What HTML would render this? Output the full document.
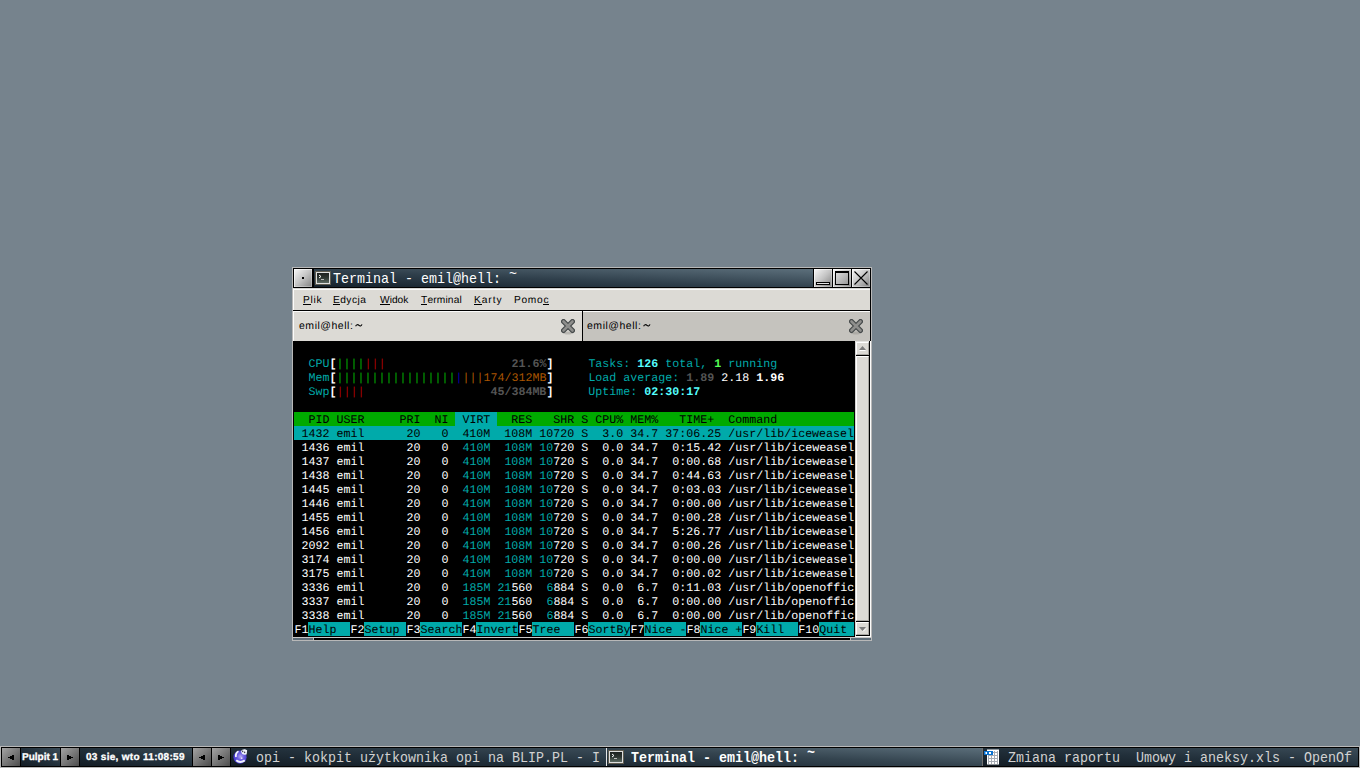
<!DOCTYPE html>
<html><head><meta charset="utf-8">
<style>
*{margin:0;padding:0;box-sizing:border-box}
html,body{width:1360px;height:768px;overflow:hidden;background:#76838d;position:relative;font-family:"Liberation Sans",sans-serif}
.a{position:absolute}
.btn{position:absolute;background:linear-gradient(135deg,#f8f8f8 0%,#c4c4c4 50%,#808080 100%);box-shadow:inset 1px 1px 0 rgba(255,255,255,.6),inset -1px -1px 0 rgba(255,255,255,.3)}
.tb{position:absolute;background:linear-gradient(135deg,#a4a4a4 0%,#4c4c4c 100%)}
.term{position:absolute;left:294px;top:342px;width:560px;height:294px;font-family:"Liberation Mono",monospace;font-size:11.67px;color:#fff}
.r{position:absolute;left:0.5px;height:14px;line-height:14px;white-space:pre;width:560px;margin-top:1px;text-rendering:geometricPrecision}
.rb{position:absolute;left:0;height:14px;line-height:14px;white-space:pre;width:560px;color:transparent}
.mono{font-family:"Liberation Mono",monospace}
.mi{position:absolute;top:294px;font-size:10.2px;letter-spacing:0.45px;text-rendering:geometricPrecision;line-height:14px;color:#000;white-space:pre}
.mi u{text-decoration:none;position:relative}
.mi u:after{content:"";position:absolute;left:0;right:0;bottom:1px;height:1px;background:#000}
.ttl{position:absolute;height:18px;line-height:18px;font-size:13.33px;white-space:pre;font-family:"Liberation Mono",monospace;transform:scaleY(1.11);transform-origin:0 4px}
.navy{position:absolute;background:linear-gradient(to top right,#131c24 0%,#22303b 50%,#3b4c58 100%)}
</style></head><body>

<!-- window frame -->
<div class="a" style="left:292px;top:267px;width:580px;height:374px;background:#b8b8b8"></div>
<div class="a" style="left:293px;top:268px;width:578px;height:20px;background:#000"></div>
<!-- menu button -->
<div class="btn" style="left:294px;top:269px;width:18px;height:18px"></div>
<div class="a" style="left:302px;top:277px;width:2px;height:2px;background:#000"></div>
<!-- titlebar gradient -->
<div class="a" style="left:314px;top:269px;width:499px;height:18px;background:linear-gradient(to top right,#15212b 0%,#2f3f4b 45%,#5c6f7b 100%)"></div>
<!-- terminal icon -->
<div class="a" style="left:315px;top:271px;width:16px;height:14px;border:1px solid #5f5c50;background:#dedede"></div>
<div class="a" style="left:317px;top:273px;width:12px;height:10px;background:linear-gradient(#1c201e 0%,#2e3632 50%,#5d6b63 100%)"></div>
<svg class="a" style="left:317px;top:273px" width="12" height="10"><path d="M2 2 L4 3.5 L2 5" stroke="#fff" stroke-width="1" fill="none"/><rect x="4" y="6" width="3" height="1" fill="#bbb"/></svg>
<!-- title text -->
<div class="ttl" style="left:333px;top:270px;color:#fff">Terminal - emil@hell: <span style="position:relative;top:-4px">~</span></div>
<!-- titlebar buttons -->
<div class="btn" style="left:814px;top:269px;width:18px;height:18px"></div>
<div class="a" style="left:816px;top:282px;width:14px;height:3px;border:1px solid #000;background:#e0e0e0"></div>
<div class="btn" style="left:833px;top:269px;width:18px;height:18px"></div>
<div class="a" style="left:835px;top:271px;width:14px;height:14px;border:1px solid #000;border-top-width:2px;background:linear-gradient(135deg,#dcdcdc,#9a9a9a)"></div>
<div class="btn" style="left:852px;top:269px;width:18px;height:18px"></div>
<svg class="a" style="left:852px;top:269px" width="18" height="18"><path d="M2.5 2.5 L15.5 15.5 M15.5 2.5 L2.5 15.5" stroke="#000" stroke-width="1.1"/></svg>

<!-- menubar -->
<div class="a" style="left:293px;top:288px;width:578px;height:23px;background:#000"></div>
<div class="a" style="left:293px;top:288px;width:577px;height:22px;background:#dcdad5;border-top:1px solid #d4d4d2;border-left:1px solid #fbfbfa"></div>
<div class="a" style="left:293px;top:289px;width:577px;height:1px;background:#fbfbfa"></div>
<div class="mi" style="left:303px;letter-spacing:0.75px"><u>P</u>lik</div>
<div class="mi" style="left:333px"><u>E</u>dycja</div>
<div class="mi" style="left:380px;letter-spacing:0"><u>W</u>idok</div>
<div class="mi" style="left:421px;letter-spacing:0.16px"><u>T</u>erminal</div>
<div class="mi" style="left:474px;letter-spacing:0.95px"><u>K</u>arty</div>
<div class="mi" style="left:514px;letter-spacing:0.7px">Pomo<u>c</u></div>

<!-- tabs -->
<div class="a" style="left:293px;top:311px;width:578px;height:30px;background:#000"></div>
<div class="a" style="left:293px;top:311px;width:289px;height:30px;background:#dcdad5;border-top:1px solid #fbfbfa;border-left:1px solid #fbfbfa"></div>
<div class="a" style="left:583px;top:311px;width:287px;height:30px;background:#c5c3be;border-top:1px solid #fbfbfa"></div>
<div class="a" style="left:299px;top:319px;font-size:10.5px;letter-spacing:0.52px;line-height:14px;color:#000;text-rendering:geometricPrecision">emil@hell: </div><svg class="a" style="left:355px;top:323px" width="8" height="5"><path d="M0.6 3.2 C1.6 1.2 3 1.4 4 2.4 C5 3.4 6.2 3.2 7 1.4" stroke="#000" stroke-width="1.1" fill="none"/></svg>
<div class="a" style="left:587px;top:319px;font-size:10.5px;letter-spacing:0.52px;line-height:14px;color:#000;text-rendering:geometricPrecision">emil@hell: </div><svg class="a" style="left:643px;top:323px" width="8" height="5"><path d="M0.6 3.2 C1.6 1.2 3 1.4 4 2.4 C5 3.4 6.2 3.2 7 1.4" stroke="#000" stroke-width="1.1" fill="none"/></svg>
<svg class="a" style="left:561px;top:319px" width="14" height="16"><ellipse cx="7" cy="14" rx="4" ry="1.5" fill="#b9b7b2"/><path d="M2.5 2.5 L11.5 11.5 M11.5 2.5 L2.5 11.5" stroke="#45494a" stroke-width="5" stroke-linecap="round"/><path d="M2.5 2.5 L11.5 11.5 M11.5 2.5 L2.5 11.5" stroke="#8e8e8c" stroke-width="2.6" stroke-linecap="round"/></svg>
<svg class="a" style="left:849px;top:319px" width="14" height="16"><ellipse cx="7" cy="14" rx="4" ry="1.5" fill="#aeaca7"/><path d="M2.5 2.5 L11.5 11.5 M11.5 2.5 L2.5 11.5" stroke="#45494a" stroke-width="5" stroke-linecap="round"/><path d="M2.5 2.5 L11.5 11.5 M11.5 2.5 L2.5 11.5" stroke="#8e8e8c" stroke-width="2.6" stroke-linecap="round"/></svg>

<!-- terminal bg -->
<div class="a" style="left:293px;top:341px;width:562px;height:296px;background:#000"></div>
<div class="term">
<div class="rb" style="top:70px"><span style="background:#00aa00">  PID USER     PRI  NI </span><span style="background:#00aaaa"> VIRT </span><span style="background:#00aa00">  RES   SHR S CPU% MEM%   TIME+  Command           </span></div>
<div class="rb" style="top:84px"><span style="background:#00aaaa"> 1432 emil      20   0  410M  108M 10720 S  3.0 34.7 37:06.25 /usr/lib/iceweasel</span></div>
<div class="rb" style="top:280px">F1<span style="background:#00aaaa">Help  </span>F2<span style="background:#00aaaa">Setup </span>F3<span style="background:#00aaaa">Search</span>F4<span style="background:#00aaaa">Invert</span>F5<span style="background:#00aaaa">Tree  </span>F6<span style="background:#00aaaa">SortBy</span>F7<span style="background:#00aaaa">Nice -</span>F8<span style="background:#00aaaa">Nice +</span>F9<span style="background:#00aaaa">Kill  </span>F10<span style="background:#00aaaa">Quit </span></div>
<div class="r" style="top:0px"></div>
<div class="r" style="top:14px">  <span style="color:#00aaaa">CPU</span><span style="color:#ffffff;font-weight:bold">[</span><span style="color:#00aa00">||||</span><span style="color:#aa0000">|||</span>                  <span style="color:#555555;font-weight:bold">21.6%</span><span style="color:#ffffff;font-weight:bold">]</span>     <span style="color:#00aaaa">Tasks: </span><span style="color:#55ffff;font-weight:bold">126</span><span style="color:#00aaaa"> total, </span><span style="color:#55ff55;font-weight:bold">1</span><span style="color:#00aaaa"> running</span></div>
<div class="r" style="top:28px">  <span style="color:#00aaaa">Mem</span><span style="color:#ffffff;font-weight:bold">[</span><span style="color:#00aa00">|||||||||||||||||</span><span style="color:#0000aa">|</span><span style="color:#aa5500">|||</span><span style="color:#aa5500">174/312MB</span><span style="color:#ffffff;font-weight:bold">]</span>     <span style="color:#00aaaa">Load average: </span><span style="color:#555555;font-weight:bold">1.89</span> <span style="color:#ffffff">2.18</span> <span style="color:#ffffff;font-weight:bold">1.96</span></div>
<div class="r" style="top:42px">  <span style="color:#00aaaa">Swp</span><span style="color:#ffffff;font-weight:bold">[</span><span style="color:#aa0000">||||</span>                  <span style="color:#555555;font-weight:bold">45/384MB</span><span style="color:#ffffff;font-weight:bold">]</span>     <span style="color:#00aaaa">Uptime: </span><span style="color:#55ffff;font-weight:bold">02:30:17</span></div>
<div class="r" style="top:56px"></div>
<div class="r" style="top:70px"><span style="color:#000000">  PID USER     PRI  NI </span><span style="color:#000000"> VIRT </span><span style="color:#000000">  RES   SHR S CPU% MEM%   TIME+  Command           </span></div>
<div class="r" style="top:84px"><span style="color:#000000"> 1432 emil      20   0  410M  108M 10720 S  3.0 34.7 37:06.25 /usr/lib/iceweasel</span></div>
<div class="r" style="top:98px"><span style="color:#ffffff"> 1436 emil      20   0  </span><span style="color:#00aaaa">410M</span>  <span style="color:#00aaaa">108M</span> <span style="color:#00aaaa">10</span><span style="color:#ffffff">720</span><span style="color:#ffffff"> S  0.0 34.7  0:15.42 /usr/lib/iceweasel</span></div>
<div class="r" style="top:112px"><span style="color:#ffffff"> 1437 emil      20   0  </span><span style="color:#00aaaa">410M</span>  <span style="color:#00aaaa">108M</span> <span style="color:#00aaaa">10</span><span style="color:#ffffff">720</span><span style="color:#ffffff"> S  0.0 34.7  0:00.68 /usr/lib/iceweasel</span></div>
<div class="r" style="top:126px"><span style="color:#ffffff"> 1438 emil      20   0  </span><span style="color:#00aaaa">410M</span>  <span style="color:#00aaaa">108M</span> <span style="color:#00aaaa">10</span><span style="color:#ffffff">720</span><span style="color:#ffffff"> S  0.0 34.7  0:44.63 /usr/lib/iceweasel</span></div>
<div class="r" style="top:140px"><span style="color:#ffffff"> 1445 emil      20   0  </span><span style="color:#00aaaa">410M</span>  <span style="color:#00aaaa">108M</span> <span style="color:#00aaaa">10</span><span style="color:#ffffff">720</span><span style="color:#ffffff"> S  0.0 34.7  0:03.03 /usr/lib/iceweasel</span></div>
<div class="r" style="top:154px"><span style="color:#ffffff"> 1446 emil      20   0  </span><span style="color:#00aaaa">410M</span>  <span style="color:#00aaaa">108M</span> <span style="color:#00aaaa">10</span><span style="color:#ffffff">720</span><span style="color:#ffffff"> S  0.0 34.7  0:00.00 /usr/lib/iceweasel</span></div>
<div class="r" style="top:168px"><span style="color:#ffffff"> 1455 emil      20   0  </span><span style="color:#00aaaa">410M</span>  <span style="color:#00aaaa">108M</span> <span style="color:#00aaaa">10</span><span style="color:#ffffff">720</span><span style="color:#ffffff"> S  0.0 34.7  0:00.28 /usr/lib/iceweasel</span></div>
<div class="r" style="top:182px"><span style="color:#ffffff"> 1456 emil      20   0  </span><span style="color:#00aaaa">410M</span>  <span style="color:#00aaaa">108M</span> <span style="color:#00aaaa">10</span><span style="color:#ffffff">720</span><span style="color:#ffffff"> S  0.0 34.7  5:26.77 /usr/lib/iceweasel</span></div>
<div class="r" style="top:196px"><span style="color:#ffffff"> 2092 emil      20   0  </span><span style="color:#00aaaa">410M</span>  <span style="color:#00aaaa">108M</span> <span style="color:#00aaaa">10</span><span style="color:#ffffff">720</span><span style="color:#ffffff"> S  0.0 34.7  0:00.26 /usr/lib/iceweasel</span></div>
<div class="r" style="top:210px"><span style="color:#ffffff"> 3174 emil      20   0  </span><span style="color:#00aaaa">410M</span>  <span style="color:#00aaaa">108M</span> <span style="color:#00aaaa">10</span><span style="color:#ffffff">720</span><span style="color:#ffffff"> S  0.0 34.7  0:00.00 /usr/lib/iceweasel</span></div>
<div class="r" style="top:224px"><span style="color:#ffffff"> 3175 emil      20   0  </span><span style="color:#00aaaa">410M</span>  <span style="color:#00aaaa">108M</span> <span style="color:#00aaaa">10</span><span style="color:#ffffff">720</span><span style="color:#ffffff"> S  0.0 34.7  0:00.02 /usr/lib/iceweasel</span></div>
<div class="r" style="top:238px"><span style="color:#ffffff"> 3336 emil      20   0  </span><span style="color:#00aaaa">185M</span> <span style="color:#00aaaa">21</span><span style="color:#ffffff">560</span>  <span style="color:#00aaaa">6</span><span style="color:#ffffff">884</span><span style="color:#ffffff"> S  0.0  6.7  0:11.03 /usr/lib/openoffic</span></div>
<div class="r" style="top:252px"><span style="color:#ffffff"> 3337 emil      20   0  </span><span style="color:#00aaaa">185M</span> <span style="color:#00aaaa">21</span><span style="color:#ffffff">560</span>  <span style="color:#00aaaa">6</span><span style="color:#ffffff">884</span><span style="color:#ffffff"> S  0.0  6.7  0:00.00 /usr/lib/openoffic</span></div>
<div class="r" style="top:266px"><span style="color:#ffffff"> 3338 emil      20   0  </span><span style="color:#00aaaa">185M</span> <span style="color:#00aaaa">21</span><span style="color:#ffffff">560</span>  <span style="color:#00aaaa">6</span><span style="color:#ffffff">884</span><span style="color:#ffffff"> S  0.0  6.7  0:00.00 /usr/lib/openoffic</span></div>
<div class="r" style="top:280px"><span style="color:#ffffff">F1</span><span style="color:#000000">Help  </span><span style="color:#ffffff">F2</span><span style="color:#000000">Setup </span><span style="color:#ffffff">F3</span><span style="color:#000000">Search</span><span style="color:#ffffff">F4</span><span style="color:#000000">Invert</span><span style="color:#ffffff">F5</span><span style="color:#000000">Tree  </span><span style="color:#ffffff">F6</span><span style="color:#000000">SortBy</span><span style="color:#ffffff">F7</span><span style="color:#000000">Nice -</span><span style="color:#ffffff">F8</span><span style="color:#000000">Nice +</span><span style="color:#ffffff">F9</span><span style="color:#000000">Kill  </span><span style="color:#ffffff">F10</span><span style="color:#000000">Quit </span></div>
</div>
<!-- scrollbar -->
<div class="a" style="left:855px;top:341px;width:16px;height:296px;background:#fbfbfa"></div>
<div class="a" style="left:855px;top:341px;width:1px;height:295px;background:#d6d5d2"></div>
<div class="a" style="left:855px;top:341px;width:14px;height:1px;background:#e4e3e0"></div>
<div class="a" style="left:869px;top:341px;width:1px;height:295px;background:#000"></div>
<!-- up button -->
<div class="a" style="left:856px;top:342px;width:13px;height:13px;background:#dcdad5;border-top:1px solid #fff;border-left:1px solid #fff;border-right:1px solid #a9a7a2;border-bottom:1px solid #a9a7a2"></div>
<svg class="a" style="left:856px;top:342px" width="13" height="13"><path d="M3 8 L10 8 L6.5 4 Z" fill="#7b7b7b"/><rect x="3.5" y="8" width="6" height="1" fill="#fff"/></svg>
<div class="a" style="left:856px;top:355px;width:13px;height:1px;background:#000"></div>
<!-- thumb -->
<div class="a" style="left:856px;top:356px;width:13px;height:265px;background:#dcdad5;border-top:1px solid #fff;border-left:1px solid #fff;border-right:1px solid #a9a7a2;border-bottom:1px solid #a9a7a2"></div>
<div class="a" style="left:856px;top:621px;width:13px;height:1px;background:#000"></div>
<!-- down button -->
<div class="a" style="left:856px;top:622px;width:13px;height:13px;background:#dcdad5;border-top:1px solid #fff;border-left:1px solid #fff;border-right:1px solid #a9a7a2;border-bottom:1px solid #a9a7a2"></div>
<svg class="a" style="left:856px;top:622px" width="13" height="13"><path d="M3 5 L10 5 L6.5 9 Z" fill="#7b7b7b"/><path d="M7 9.5 L10 6.5" stroke="#fff" stroke-width="1"/></svg>
<div class="a" style="left:856px;top:635px;width:14px;height:1px;background:#000"></div>
<div class="a" style="left:870px;top:311px;width:1px;height:30px;background:#000"></div>

<!-- bottom handle -->
<div class="a" style="left:293px;top:636px;width:562px;height:1px;background:#000"></div>
<div class="a" style="left:293px;top:637px;width:578px;height:1px;background:#c8c8c8"></div>
<div class="a" style="left:293px;top:638px;width:20px;height:2px;background:#5c6b76"></div>
<div class="a" style="left:314px;top:638px;width:536px;height:2px;background:#000"></div>
<div class="a" style="left:851px;top:638px;width:20px;height:2px;background:#5c6b76"></div>

<!-- taskbar -->
<div class="a" style="left:0;top:746px;width:1360px;height:22px;background:#b8b8b8"></div>
<div class="a" style="left:1px;top:747px;width:1358px;height:20px;background:#000"></div>
<div class="tb" style="left:2px;top:748px;width:18px;height:18px"></div>
<svg class="a" style="left:2px;top:748px" width="18" height="18"><rect x="6" y="9" width="2" height="1"/><rect x="8" y="8" width="2" height="3"/><rect x="10" y="7" width="2" height="5"/></svg>
<div class="navy" style="left:21px;top:748px;width:39px;height:18px"></div>
<div class="a" style="left:22px;top:749px;height:18px;line-height:18px;font-size:10px;font-weight:bold;color:#fff;text-rendering:geometricPrecision;-webkit-text-stroke:0.3px #fff">Pulpit 1</div>
<div class="tb" style="left:61px;top:748px;width:18px;height:18px"></div>
<svg class="a" style="left:61px;top:748px" width="18" height="18"><rect x="6" y="7" width="2" height="5"/><rect x="8" y="8" width="2" height="3"/><rect x="10" y="9" width="2" height="1"/></svg>
<div class="navy" style="left:80px;top:748px;width:112px;height:18px"></div>
<div class="a" style="left:86px;top:749px;height:18px;line-height:18px;font-size:10px;letter-spacing:0.3px;font-weight:bold;color:#fff;text-rendering:geometricPrecision;-webkit-text-stroke:0.3px #fff">03 sie, wto 11:08:59</div>
<div class="tb" style="left:193px;top:748px;width:18px;height:18px"></div>
<svg class="a" style="left:193px;top:748px" width="18" height="18"><rect x="6" y="9" width="2" height="1"/><rect x="8" y="8" width="2" height="3"/><rect x="10" y="7" width="2" height="5"/></svg>
<div class="tb" style="left:212px;top:748px;width:18px;height:18px"></div>
<svg class="a" style="left:212px;top:748px" width="18" height="18"><rect x="6" y="7" width="2" height="5"/><rect x="8" y="8" width="2" height="3"/><rect x="10" y="9" width="2" height="1"/></svg>
<!-- task 1 -->
<div class="navy" style="left:231px;top:748px;width:375px;height:18px"></div>
<svg class="a" style="left:232px;top:748px" width="18" height="18"><defs><radialGradient id="g1" cx="0.55" cy="0.45" r="0.6"><stop offset="0" stop-color="#b4a8f0"/><stop offset="0.45" stop-color="#6a5ce0"/><stop offset="1" stop-color="#3a2cc8"/></radialGradient></defs><circle cx="8" cy="9.2" r="6.6" fill="url(#g1)"/><path d="M4 9 Q3.2 5 6.5 3.3" stroke="#f4f4ff" stroke-width="1.8" fill="none"/><path d="M4.2 12.2 Q8 15.6 12.8 12.4" stroke="#f0f2ff" stroke-width="2" fill="none"/><path d="M8.8 3.2 Q10 1 13 1.2 L15.2 2.2 L14.6 6.4 L12.2 6.8 Q9.4 6 8.8 3.2 Z" fill="#f4f6ff"/><circle cx="10.6" cy="3.4" r="0.8" fill="#4a4a5a"/><circle cx="12.6" cy="4.4" r="0.8" fill="#4a4a5a"/><circle cx="9.6" cy="10.2" r="0.9" fill="#e8e0ff"/></svg>
<div class="ttl" style="left:256px;top:749px;color:#d2d2d2">opi - kokpit użytkownika opi na BLIP.PL - I</div>
<div class="a" style="left:606px;top:748px;width:1px;height:18px;background:#e6e6e6"></div>
<!-- task 2 active -->
<div class="a" style="left:607px;top:748px;width:375px;height:18px;background:linear-gradient(to top right,#1c2832 0%,#34444f 50%,#5b6e7a 100%)"></div>
<div class="a" style="left:608px;top:750px;width:16px;height:14px;border:1px solid #5f5c50;background:#dedede"></div>
<div class="a" style="left:610px;top:752px;width:12px;height:10px;background:linear-gradient(#1c201e 0%,#2e3632 50%,#5d6b63 100%)"></div>
<svg class="a" style="left:610px;top:752px" width="12" height="10"><path d="M2 2 L4 3.5 L2 5" stroke="#fff" stroke-width="1" fill="none"/><rect x="4" y="6" width="3" height="1" fill="#bbb"/></svg>
<div class="ttl" style="left:631px;top:749px;color:#fff;font-weight:bold">Terminal - emil@hell: <span style="position:relative;top:-4px">~</span></div>
<div class="a" style="left:982px;top:748px;width:1px;height:18px;background:#707070"></div>
<!-- task 3 -->
<div class="navy" style="left:983px;top:748px;width:375px;height:18px"></div>
<svg class="a" style="left:983px;top:748px" width="18" height="18"><rect x="4" y="1.5" width="12" height="15" fill="#fff"/><g stroke="#a7acb4" stroke-width="1"><path d="M5.5 3 V16 M8.5 3 V16 M11.5 3 V16 M14.5 3 V16 M5 4.5 H15 M5 7.5 H15 M5 10.5 H15 M5 13.5 H15"/></g><rect x="1" y="3" width="9" height="4" fill="#0a72d0"/><rect x="2.5" y="4" width="1.5" height="2" fill="#fff"/><rect x="6" y="4" width="2" height="2" fill="#fff"/></svg>
<div class="ttl" style="left:1008px;top:749px;color:#d2d2d2">Zmiana raportu  Umowy i aneksy.xls - OpenOf</div>

</body></html>
